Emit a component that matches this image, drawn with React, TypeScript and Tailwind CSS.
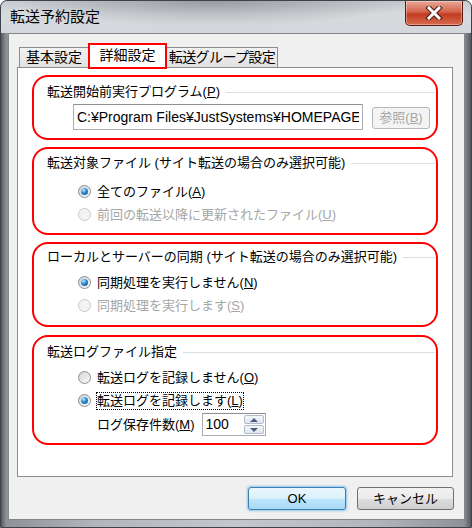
import React from "react";

const ui = "font-['Liberation_Sans','Noto_Sans_CJK_JP',sans-serif]";

function Radio({ checked, disabled }: { checked?: boolean; disabled?: boolean }) {
    return (
        <span
            className={`flex h-[13px] w-[13px] shrink-0 items-center justify-center rounded-full border ${
                disabled
                    ? "border-[#c9c9c9] bg-[#f3f3f3]"
                    : "border-[#8a8c8e] bg-[linear-gradient(135deg,#d4d4d4,#fbfbfb)]"
            }`}
        >
            {checked && (
                <span className="h-[7px] w-[7px] rounded-full bg-[radial-gradient(circle_at_35%_30%,#b7ecff_0%,#2a8ad0_45%,#0d4a8a_100%)]" />
            )}
        </span>
    );
}

function Option({
    label,
    checked,
    disabled,
    focus,
}: {
    label: React.ReactNode;
    checked?: boolean;
    disabled?: boolean;
    focus?: boolean;
}) {
    return (
        <div className="flex h-[23px] items-center gap-[6px] pl-[44px]">
            <Radio checked={checked} disabled={disabled} />
            <span
                className={`whitespace-nowrap leading-[16px] ${disabled ? "text-[#a6a6a6]" : "text-black"} ${
                    focus ? "-ml-[1px] border border-dotted border-black" : ""
                }`}
            >
                {label}
            </span>
        </div>
    );
}

function Group({
    title,
    className,
    children,
}: {
    title: React.ReactNode;
    className: string;
    children: React.ReactNode;
}) {
    return (
        <div className={`flex flex-col rounded-[16px] border-2 border-[#ff0000] ${className}`}>
            <div className="flex h-[16px] items-center pl-[13px] pr-[1px]">
                <span className="whitespace-nowrap">{title}</span>
                <span className="ml-[6px] h-px flex-1 bg-[#d5dfe5]" />
            </div>
            {children}
        </div>
    );
}

export default function App() {
    return (
        <div
            className={`${ui} flex h-[528px] w-[472px] flex-col overflow-hidden rounded-t-[7px] border border-[#3f4348] bg-[linear-gradient(90deg,#55585c_0px,#8e9296_5px,#b2b6ba_20%,#c4c8cc_50%,#b2b6ba_80%,#8e9296_98.5%,#55585c_100%)] text-[13px] text-black`}
        >
            {/* title bar */}
            <div className="flex h-[32px] shrink-0 items-start justify-between bg-[radial-gradient(ellipse_at_45%_0%,rgba(95,100,106,0.45),transparent_55%),linear-gradient(180deg,#c6cbd0_0%,#d7dadd_40%,#d3d7db_100%)] pl-[9px] pr-[8px]">
                <span className="mt-[7px] text-[15px] leading-[18px] text-black">転送予約設定</span>
                <div className="flex h-[25px] w-[58px] items-center justify-center rounded-b-[5px] border border-t-0 border-[#5a1a12] bg-[linear-gradient(180deg,#e9a898_0%,#d4634d_45%,#c23b22_55%,#d66a4f_100%)] shadow-[inset_0_0_0_1px_rgba(255,255,255,0.35)]">
                    <svg width="18" height="14" viewBox="0 0 18 14">
                        <path d="M4 2 L14 12 M14 2 L4 12" stroke="#4a1a14" strokeWidth="5" strokeLinecap="square" />
                        <path d="M4 2 L14 12 M14 2 L4 12" stroke="#ffffff" strokeWidth="3" strokeLinecap="square" />
                    </svg>
                </div>
            </div>

            {/* client area */}
            <div className="ml-[7px] flex h-[487px] w-[457px] flex-col border border-[#83878c] bg-[#f0f0f0] pt-[9px]">
                {/* tabs */}
                <div className="relative z-10 flex h-[24px] items-end pl-[10px]">
                    <div className="flex h-[20px] w-[69px] items-center justify-center border border-b-0 border-r-0 border-[#898c95] bg-[linear-gradient(180deg,#f2f2f2,#e1e1e1)] text-[14px]">
                        基本設定
                    </div>
                    <div className="-mb-[2px] flex h-[26px] w-[79px] items-center justify-center border-2 border-[#ff0000] bg-white pb-[2px] text-[14px]">
                        詳細設定
                    </div>
                    <div className="flex h-[20px] w-[111px] items-center justify-center whitespace-nowrap border border-b-0 border-l-0 border-[#898c95] bg-[linear-gradient(180deg,#f2f2f2,#e1e1e1)] text-[14px] tracking-[-0.6px]">
                        転送グループ設定
                    </div>
                </div>

                {/* tab panel */}
                <div className="ml-[8px] flex h-[410px] w-[436px] flex-col gap-[7px] border border-[#898c95] bg-white px-[14px] pt-[7px]">
                    <Group title={<>転送開始前実行プログラム(<u>P</u>)</>} className="h-[65px] pt-[7px]">
                        <div className="mt-[4px] flex items-start pl-[39px]">
                            <div className="h-[26px] w-[290px] shrink-0 overflow-hidden border border-[#abadb3] border-t-[#8e9298] bg-white pl-[3px]">
                                <span className="block w-[282px] overflow-hidden whitespace-nowrap font-['Liberation_Sans',sans-serif] text-[14px] leading-[24px]">
                                    C:¥Program Files¥JustSystems¥HOMEPAGEB
                                </span>
                            </div>
                            <div className="ml-[9px] mt-[3px] flex h-[22px] w-[58px] items-center justify-center rounded-[3px] border border-[#b5b9bd] bg-[#f4f4f4] text-[#a6a6a6]">
                                参照(<u>B</u>)
                            </div>
                        </div>
                    </Group>

                    <Group title="転送対象ファイル (サイト転送の場合のみ選択可能)" className="h-[88px] pt-[6px]">
                        <div className="mt-[9px] flex flex-col">
                            <Option checked label={<>全てのファイル(<u>A</u>)</>} />
                            <Option disabled label={<>前回の転送以降に更新されたファイル(<u>U</u>)</>} />
                        </div>
                    </Group>

                    <Group title="ローカルとサーバーの同期 (サイト転送の場合のみ選択可能)" className="h-[85px] pt-[5px]">
                        <div className="mt-[6px] flex flex-col">
                            <Option checked label={<>同期処理を実行しません(<u>N</u>)</>} />
                            <Option disabled label={<>同期処理を実行します(<u>S</u>)</>} />
                        </div>
                    </Group>

                    <Group title="転送ログファイル指定" className="mt-[1px] h-[110px] pt-[7px]">
                        <div className="mt-[6px] flex flex-col">
                            <Option label={<>転送ログを記録しません(<u>O</u>)</>} />
                            <Option checked focus label={<>転送ログを記録します(<u>L</u>)</>} />
                            <div className="flex h-[25px] items-center pl-[63px]">
                                <span className="whitespace-nowrap">
                                    ログ保存件数(<u>M</u>)
                                </span>
                                <div className="ml-[7px] flex h-[23px] w-[64px] items-stretch border border-[#abadb3] border-t-[#8e9298] bg-white p-[1px]">
                                    <span className="flex flex-1 items-center pl-[2px] font-['Liberation_Sans',sans-serif] text-[14px]">
                                        100
                                    </span>
                                    <div className="flex w-[20px] flex-col gap-px">
                                        <div className="flex flex-1 items-center justify-center rounded-[2px] border border-[#b3bccb] bg-[linear-gradient(180deg,#f4f7fb,#dfe6ef)]">
                                            <svg width="8" height="4" viewBox="0 0 8 4">
                                                <path d="M0 4 L4 0 L8 4 Z" fill="#4a5d82" />
                                            </svg>
                                        </div>
                                        <div className="flex flex-1 items-center justify-center rounded-[2px] border border-[#b3bccb] bg-[linear-gradient(180deg,#f4f7fb,#dfe6ef)]">
                                            <svg width="8" height="4" viewBox="0 0 8 4">
                                                <path d="M0 0 L4 4 L8 0 Z" fill="#4a5d82" />
                                            </svg>
                                        </div>
                                    </div>
                                </div>
                            </div>
                        </div>
                    </Group>
                </div>

                {/* dialog buttons */}
                <div className="mt-[10px] flex justify-end gap-[11px] pr-[10px]">
                    <div className="flex h-[23px] w-[98px] items-center justify-center rounded-[3px] border border-[#3c7fb1] bg-[linear-gradient(180deg,#eaf6fd_0%,#d9f0fc_50%,#bee6fd_50%,#a7d9f5_100%)] shadow-[0_0_2px_1px_rgba(70,170,230,0.6)]">
                        OK
                    </div>
                    <div className="flex h-[23px] w-[97px] items-center justify-center rounded-[3px] border border-[#707070] bg-[linear-gradient(180deg,#f2f2f2_0%,#ebebeb_50%,#dddddd_50%,#cfcfcf_100%)]">
                        キャンセル
                    </div>
                </div>
            </div>
        </div>
    );
}
